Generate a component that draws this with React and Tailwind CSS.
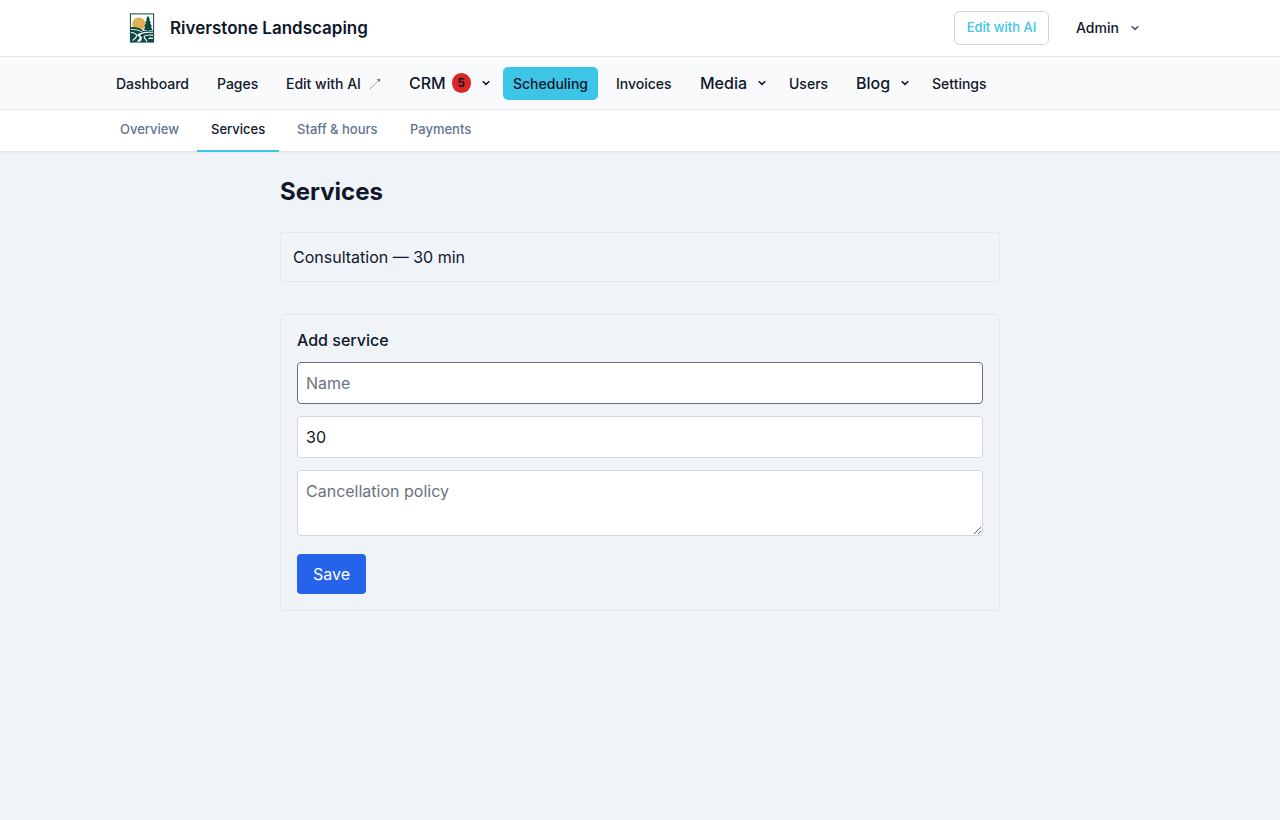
import React from 'react';
import clsx from 'clsx';

const navItems = [
    { label: 'Dashboard', width: 'w-[93px]' },
    { label: 'Pages', width: 'w-[61px]' },
    { label: 'Edit with AI', width: 'w-[115px]', external: true },
    { label: 'CRM', width: 'w-24', menu: true, badge: 5 },
    { label: 'Scheduling', width: 'w-[95px]', active: true },
    { label: 'Invoices', width: 'w-[76px]' },
    { label: 'Media', width: 'w-[81px]', menu: true },
    { label: 'Users', width: 'w-[59px]' },
    { label: 'Blog', width: 'w-[68px]', menu: true },
    { label: 'Settings', width: 'w-[75px]' },
];

const tabs = [
    { label: 'Overview', width: 'w-[87px]' },
    { label: 'Services', width: 'w-[82px]', active: true },
    { label: 'Staff & hours', width: 'w-[109px]' },
    { label: 'Payments', width: 'w-[89px]' },
];

const Chevron = ({ className }) => (
    <svg viewBox="0 0 8 6" className={clsx('h-1.5 w-2 shrink-0', className)} fill="none" stroke="currentColor" strokeWidth="1.5">
        <path d="M0.7 1.2 4 4.4 7.3 1.2" />
    </svg>
);

const Logo = () => (
    <svg viewBox="0 0 26 30" className="h-[30px] w-[26px] shrink-0">
        <rect x="1" y="0.5" width="24" height="29" fill="#fff" />
        <circle cx="9.8" cy="11" r="6.6" fill="#dfb153" />
        <path d="M19 2.8 17 6.5h1l-2 3.5h1.1l-2 3.5h1.3L14.9 17h3.5v2h1.2v-2h3.8l-1.6-3.5H23L21 10h1.1L20 6.5h1z" fill="#0b4a44" />
        <path d="M1.5 14.2c5-.7 9.5.5 13 3.8 3.500-.6 6.500-.6 10-.3v11.300h-23z" fill="#0b4a44" />
        <path d="M1.5 16.500c4.500-.3 8.500.8 11.500 2.400" fill="none" stroke="#fff" strokeWidth="0.9" />
        <path d="M24.5 18.700c-5-.2-10.500 0-14.500 1.700-2.200 1-2.300 2.200-.3 3.200 1.700.9.800 2.300-2.200 5.400h3.700c1.800-2.500 2.600-4.500.7-5.700-1.600-1-.5-1.900 1.600-2.600 3.500-1.100 7.500-1.100 11-1z" fill="#fff" />
        <path d="M1.5 19.500c3 0 5.200 1 6 2.700.7 1.700-1.500 3.300-4 5.300M24.500 22.200c-4-.4-8.300 0-9.300 1.500-.7 1.300 2 2.300 2.800 5.300M24.500 25.300c-2-.4-3.800-.3-5 .3" fill="none" stroke="#fff" strokeWidth="1.2" />
        <rect x="1.4" y="0.9" width="23.2" height="28.2" fill="none" stroke="#0b4a44" />
    </svg>
);

const NavItem = ({ item }) => (
    <a
        href="#"
        className={clsx(
            'flex h-[33px] shrink-0 items-center rounded-[5px] px-2.5 font-medium whitespace-nowrap',
            item.width,
            item.menu ? 'pr-[5px] pb-px text-base' : 'pt-px text-sm',
            item.active && 'bg-[#3dc5e7]'
        )}
    >
        {item.label}
        {item.badge && (
            <span className="ml-1.5 flex h-5 w-[19px] items-center justify-center rounded-full bg-[#dc2626] text-xs font-bold">
                {item.badge}
            </span>
        )}
        {item.external && (
            <svg viewBox="0 0 12 12" className="ml-2 h-3 w-3 shrink-0 text-slate-500" fill="none" stroke="currentColor" strokeWidth="0.6">
                <path d="M0.5 11.5 10.5 1.5" />
                <path d="M11.2 0.8 7.8 1.3 10.7 4.2z" fill="currentColor" stroke="none" />
            </svg>
        )}
        {item.menu && <Chevron className="ml-auto" />}
    </a>
);

const App = () => (
    <div className="min-h-screen bg-[#f0f3f8] font-['Inter',sans-serif] text-base text-[#0f172a]">
        <header className="flex h-[57px] items-center justify-between border-b border-gray-200 bg-white pr-[141px] pl-[129px]">
            <div className="flex items-center gap-[15px]">
                <Logo />
                <span className="pt-0.5 text-[17px] font-semibold whitespace-nowrap">Riverstone Landscaping</span>
            </div>
            <div className="flex items-center">
                <button className="h-[34px] w-[95px] rounded-md border border-gray-300 text-[13px] font-medium whitespace-nowrap text-[#3dc5e7]">
                    Edit with AI
                </button>
                <button className="ml-[27px] flex w-[63px] items-center justify-between text-sm font-medium">
                    Admin
                    <Chevron className="text-slate-600" />
                </button>
            </div>
        </header>

        <nav className="flex h-[53px] items-center gap-2 border-b border-gray-200 bg-[#f9fafc] pl-[106px]">
            {navItems.map((item) => (
                <NavItem key={item.label} item={item} />
            ))}
        </nav>

        <div className="flex h-[42px] gap-1 border-b border-gray-200 bg-white pl-[106px] shadow-xs">
            {tabs.map((tab) => (
                <a
                    key={tab.label}
                    href="#"
                    className={clsx(
                        '-mb-px flex items-center justify-start border-b-2 pl-3.5 text-[13px] font-medium whitespace-nowrap',
                        tab.width,
                        tab.active ? 'border-[#3dc5e7]' : 'border-transparent text-slate-500'
                    )}
                >
                    {tab.label}
                </a>
            ))}
        </div>

        <main className="mx-auto w-[720px] pt-6">
            <h1 className="text-2xl font-bold">Services</h1>

            <ul className="mt-6">
                <li className="rounded border border-gray-200 p-3">Consultation — 30 min</li>
            </ul>

            <form className="mt-8 rounded border border-gray-200 p-4">
                <h2 className="mb-3 leading-[19px] font-medium">Add service</h2>
                <div className="flex flex-col items-start gap-3">
                    <input className="h-[42px] w-full rounded border border-gray-500 bg-white px-2 placeholder:text-gray-500" placeholder="Name" />
                    <input className="h-[42px] w-full rounded border border-gray-300 bg-white px-2" defaultValue="30" />
                    <textarea className="block h-[66px] w-full rounded border border-gray-300 bg-white p-2 placeholder:text-gray-500" placeholder="Cancellation policy" />
                    <button type="button" className="mt-1.5 h-10 rounded bg-[#2563eb] px-4 text-white">Save</button>
                </div>
            </form>
        </main>
    </div>
);

export default App;
